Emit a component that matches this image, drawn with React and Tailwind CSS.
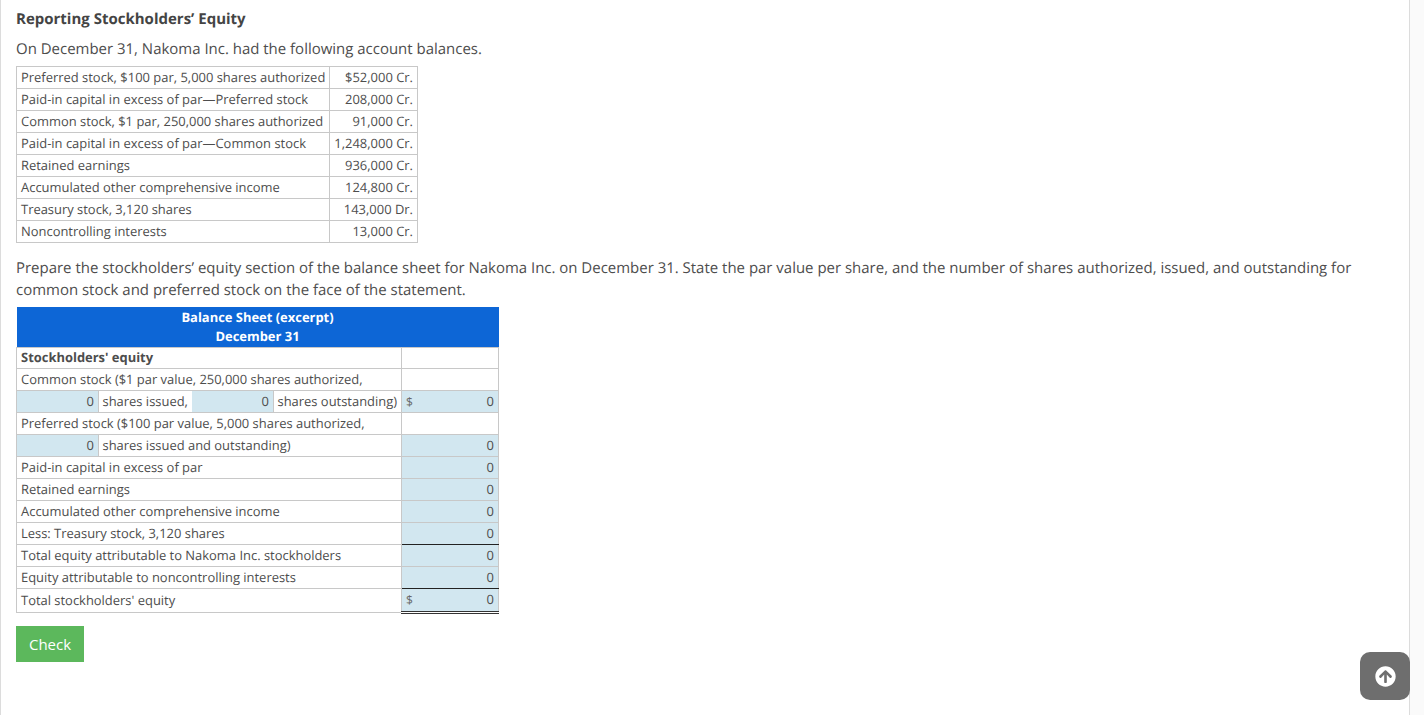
import React from "react";
import { FaArrowCircleUp } from "react-icons/fa";

const balances = [
  ["Preferred stock, $100 par, 5,000 shares authorized", "$52,000 Cr."],
  ["Paid-in capital in excess of par—Preferred stock", "208,000 Cr."],
  ["Common stock, $1 par, 250,000 shares authorized", "91,000 Cr."],
  ["Paid-in capital in excess of par—Common stock", "1,248,000 Cr."],
  ["Retained earnings", "936,000 Cr."],
  ["Accumulated other comprehensive income", "124,800 Cr."],
  ["Treasury stock, 3,120 shares", "143,000 Dr."],
  ["Noncontrolling interests", "13,000 Cr."],
];

const td = "border border-[#c8c8c8] h-[22px] p-0 px-[4px] align-middle whitespace-nowrap";
const inp = "bg-[#d2e7f0] text-right";

function Row({ label, bold, children, valueClass = "", heightClass = "leading-[21px]" }) {
  return (
    <tr>
      <td className={`${td} ${heightClass} ${bold ? "font-bold" : ""}`}>{label}</td>
      <td className={`${td} ${heightClass} ${valueClass}`}>{children}</td>
    </tr>
  );
}

function Amount({ dollar }) {
  return (
    <div className="flex justify-between">
      <span className="text-[12px] text-[#666]">{dollar ? "$" : ""}</span>
      <span>0</span>
    </div>
  );
}

export default function App() {
  return (
    <div className="relative h-[715px] overflow-hidden bg-[#fafafa] font-['Open_Sans',sans-serif] text-[#4d4d4d] [text-rendering:geometricPrecision]">
      <div className="h-full w-[1410px] bg-white border-x border-[#dcdcdc] pl-[15px]">
        <h2 className="pt-[9px] text-[15px] font-bold leading-[21px] text-[#444]">Reporting Stockholders’ Equity</h2>
        <p className="mt-[8px] text-[14.98px] leading-[22px]">On December 31, Nakoma Inc. had the following account balances.</p>

        <table className="mt-[6px] border-collapse text-[12.94px] w-[402px] table-fixed">
          <colgroup>
            <col className="w-[313px]" />
            <col className="w-[88px]" />
          </colgroup>
          <tbody>
            {balances.map(([a, b]) => (
              <tr key={a}>
                <td className={`${td} leading-[21px]`}>{a}</td>
                <td className={`${td} leading-[21px] text-right`}>{b}</td>
              </tr>
            ))}
          </tbody>
        </table>

        <p className="mt-[14px] w-[1370px] text-[14.98px] leading-[22px]">
          Prepare the stockholders’ equity section of the balance sheet for Nakoma Inc. on December 31. State the par value per share, and the number of shares authorized, issued, and outstanding for common stock and preferred stock on the face of the statement.
        </p>

        <table className="mt-[6px] border-collapse text-[12.94px] w-[482px] table-fixed">
          <colgroup>
            <col className="w-[385px]" />
            <col className="w-[97px]" />
          </colgroup>
          <thead>
            <tr>
              <th colSpan={2} className="h-[40px] p-0 bg-[#0d66d6] text-white font-bold leading-[19px] text-center">
                <div>Balance Sheet (excerpt)</div>
                <div>December 31</div>
              </th>
            </tr>
          </thead>
          <tbody>
            <Row label="Stockholders' equity" bold heightClass="!h-[21px] leading-[18px] pb-[2px]" />
            <Row label="Common stock ($1 par value, 250,000 shares authorized," />
            <tr>
              <td className="border border-[#c8c8c8] h-[22px] p-0 leading-[21px]">
                <div className="flex h-[21px]">
                  <div className={`w-[81px] pr-[4px] ${inp}`}>0</div>
                  <div className="w-[94px] border-l border-[#c8c8c8] pl-[3.5px]">shares issued,</div>
                  <div className={`w-[81px] pr-[4px] ${inp}`}>0</div>
                  <div className="flex-1 border-l border-[#c8c8c8] pl-[3.5px] whitespace-nowrap">shares outstanding)</div>
                </div>
              </td>
              <td className={`${td} leading-[21px] ${inp}`}><Amount dollar /></td>
            </tr>
            <Row label="Preferred stock ($100 par value, 5,000 shares authorized," />
            <tr>
              <td className="border border-[#c8c8c8] h-[22px] p-0 leading-[21px]">
                <div className="flex h-[21px]">
                  <div className={`w-[81px] pr-[4px] ${inp}`}>0</div>
                  <div className="flex-1 border-l border-[#c8c8c8] pl-[3.5px]">shares issued and outstanding)</div>
                </div>
              </td>
              <td className={`${td} leading-[21px] ${inp}`}><Amount /></td>
            </tr>
            <Row label="Paid-in capital in excess of par" valueClass={inp}><Amount /></Row>
            <Row label="Retained earnings" valueClass={inp}><Amount /></Row>
            <Row label="Accumulated other comprehensive income" valueClass={inp}><Amount /></Row>
            <Row label="Less: Treasury stock, 3,120 shares" valueClass={`${inp} border-b-[#222]`}><Amount /></Row>
            <Row label="Total equity attributable to Nakoma Inc. stockholders" valueClass={inp}><Amount /></Row>
            <Row label="Equity attributable to noncontrolling interests" valueClass={`${inp} border-b-[#222]`}><Amount /></Row>
            <tr>
              <td className={`${td} !h-[23px] leading-[23px]`}>Total stockholders' equity</td>
              <td className={`${td} !h-[23px] leading-[21px] ${inp} border-b-[3px] border-b-[#333] [border-bottom-style:double]`}><Amount dollar /></td>
            </tr>
          </tbody>
        </table>

        <button className="mt-[12px] block h-[36px] w-[68px] bg-[#5cb85c] text-center text-[14.98px] leading-[36px] text-white">Check</button>
      </div>

      <div className="absolute left-[1360px] top-[652px] flex h-[48px] w-[50px] items-center justify-center rounded-[10px] bg-[#6e6e6e]">
        <FaArrowCircleUp size={21} className="text-white" />
      </div>
    </div>
  );
}
